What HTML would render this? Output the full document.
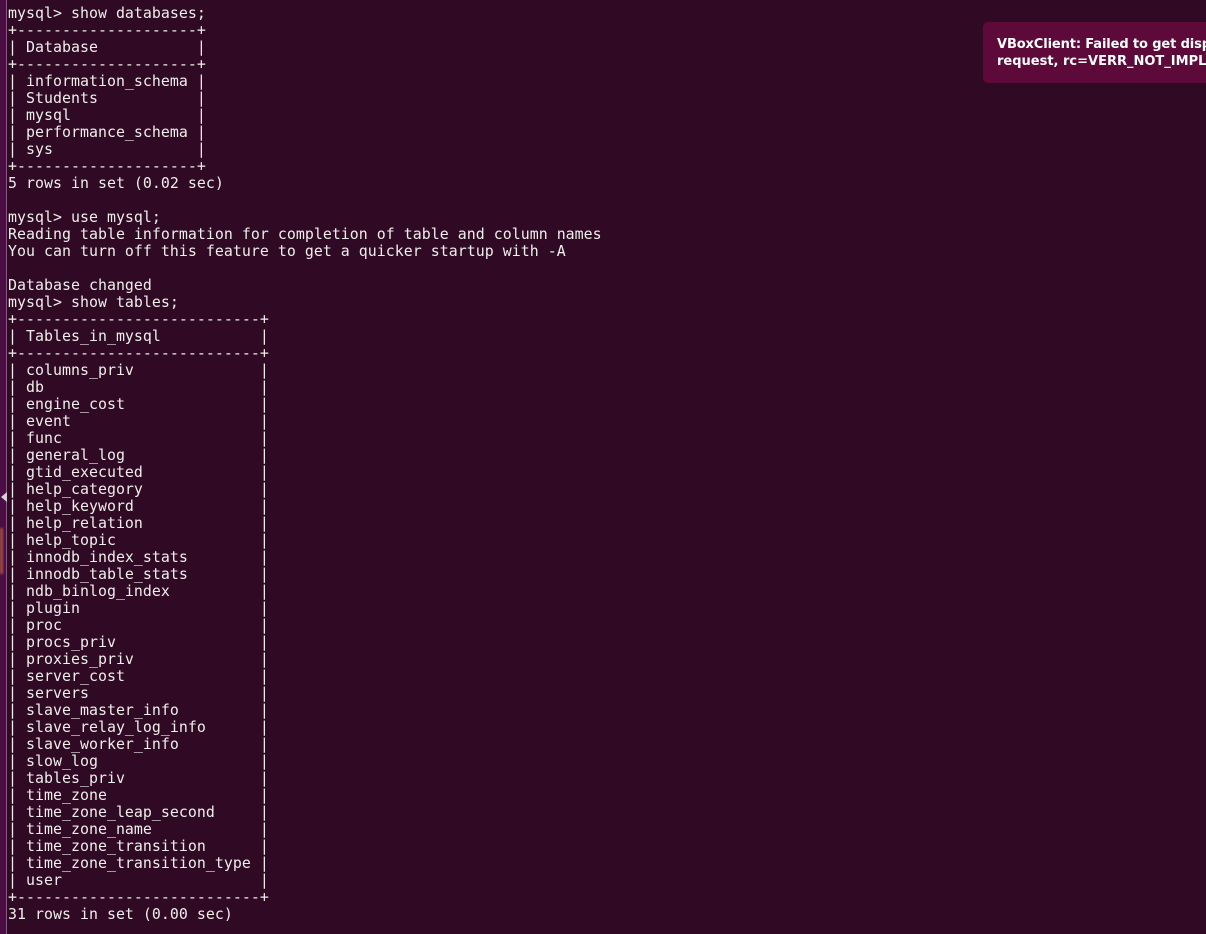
<!DOCTYPE html>
<html><head><meta charset="utf-8">
<style>
html,body{margin:0;padding:0;width:1206px;height:934px;overflow:hidden;background:#300a24}
#bar{position:absolute;left:0;top:0;width:6px;height:934px;background:#4a0e44}
#line{position:absolute;left:6px;top:0;width:1px;height:934px;background:#8a5a85}
#glow{position:absolute;left:0;top:528px;width:3px;height:46px;background:#a5533f;filter:blur(1px)}
#arrow{position:absolute;left:1px;top:492px;width:0;height:0;border-top:5px solid transparent;border-bottom:5px solid transparent;border-right:6px solid #d8d0d6}
pre{position:absolute;left:8px;top:5px;margin:0;font-family:"DejaVu Sans Mono","Liberation Mono",monospace;font-size:14.9px;line-height:17px;color:#eeeeec;letter-spacing:.03px}
#note{position:absolute;left:983px;top:22px;width:240px;height:61px;background:#5d0a3a;border-radius:5px;box-sizing:border-box;padding:14px 0 0 14px;font-family:"DejaVu Sans","Liberation Sans",sans-serif;font-weight:bold;font-size:13px;line-height:17px;color:#fff;white-space:nowrap;overflow:hidden}
#note span{letter-spacing:-.12px}
</style></head><body>
<div id="bar"></div><div id="line"></div><div id="glow"></div><div id="arrow"></div>
<pre>mysql&gt; show databases;
+--------------------+
| Database           |
+--------------------+
| information_schema |
| Students           |
| mysql              |
| performance_schema |
| sys                |
+--------------------+
5 rows in set (0.02 sec)

mysql&gt; use mysql;
Reading table information for completion of table and column names
You can turn off this feature to get a quicker startup with -A

Database changed
mysql&gt; show tables;
+---------------------------+
| Tables_in_mysql           |
+---------------------------+
| columns_priv              |
| db                        |
| engine_cost               |
| event                     |
| func                      |
| general_log               |
| gtid_executed             |
| help_category             |
| help_keyword              |
| help_relation             |
| help_topic                |
| innodb_index_stats        |
| innodb_table_stats        |
| ndb_binlog_index          |
| plugin                    |
| proc                      |
| procs_priv                |
| proxies_priv              |
| server_cost               |
| servers                   |
| slave_master_info         |
| slave_relay_log_info      |
| slave_worker_info         |
| slow_log                  |
| tables_priv               |
| time_zone                 |
| time_zone_leap_second     |
| time_zone_name            |
| time_zone_transition      |
| time_zone_transition_type |
| user                      |
+---------------------------+
31 rows in set (0.00 sec)</pre>
<div id="note"><span>VBoxClient: Failed to get display</span><br>request, rc=VERR_NOT_IMPLEMENTED</div>
</body></html>
